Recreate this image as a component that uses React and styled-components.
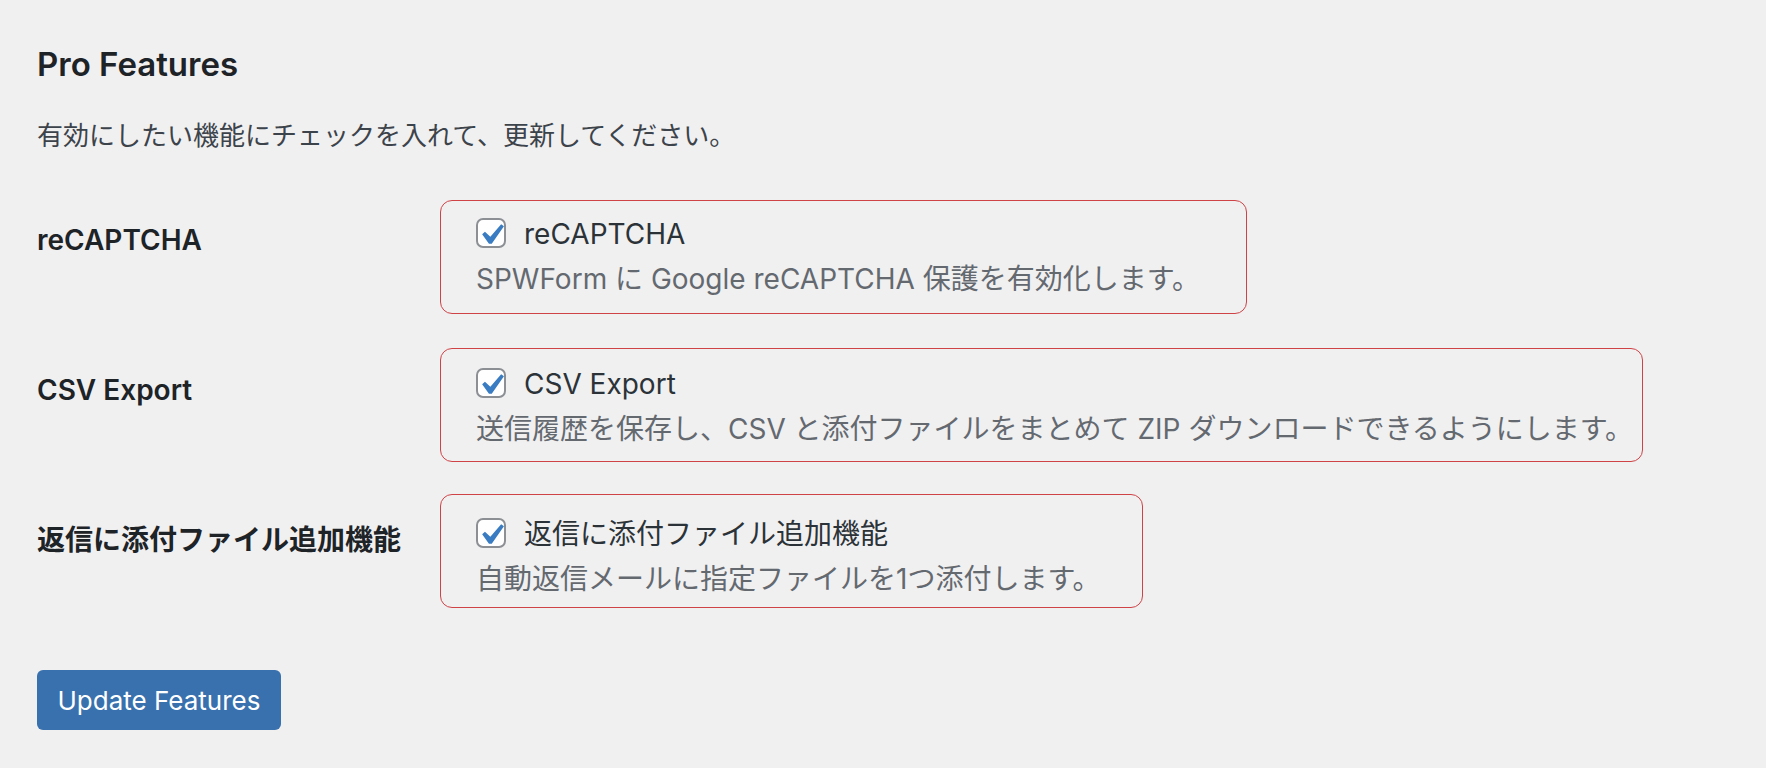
import React from "react";
import styled, { createGlobalStyle } from "styled-components";

const GlobalStyle = createGlobalStyle`
  html, body {
    margin: 0;
    padding: 0;
    background: #f0f0f1;
  }
  body {
    font-family: Inter, "Noto Sans CJK JP", sans-serif;
    color: #3c434a;
  }
`;

const Page = styled.div`
  box-sizing: border-box;
  width: 1766px;
  min-height: 768px;
  padding: 44px 0 0 37px;
  background: #f0f0f1;
`;

const Title = styled.h2`
  margin: 0;
  font-size: 33px;
  line-height: 40px;
  font-weight: 600;
  color: #1d2327;
`;

const Intro = styled.p`
  margin: 34px 0 0;
  font-size: 26px;
  line-height: 36px;
  color: #3c434a;
`;

const Table = styled.div`
  margin-top: 40px;
  display: flex;
  flex-direction: column;
`;

const Row = styled.div`
  display: grid;
  grid-template-columns: 403px auto;
  align-items: start;
  height: 150px;
`;

const Label = styled.div`
  padding-top: 28px;
  font-size: 28px;
  line-height: 36px;
  font-weight: 600;
  color: #1d2327;
`;

const Box = styled.div`
  box-sizing: border-box;
  width: ${(p) => p.$width}px;
  height: 114px;
  margin-top: ${(p) => p.$shift}px;
  padding: ${(p) => 23 - p.$shift}px 20px 0 35px;
  border: 1px solid #cf4246;
  border-radius: 12px;
`;

const CheckRow = styled.label`
  display: flex;
  align-items: center;
  gap: 18px;
  height: 30px;
`;

const CheckBox = styled.span`
  box-sizing: border-box;
  flex-shrink: 0;
  width: 30px;
  height: 30px;
  border: 2px solid #8c8f94;
  border-radius: 7px;
  background: #fff;
  display: flex;
  align-items: center;
  justify-content: center;
  overflow: visible;

  svg {
    flex-shrink: 0;
    width: 42px;
    height: 42px;
    transform: translateY(2px);
  }
`;

const CheckText = styled.span`
  padding-top: 2px;
  font-size: 28px;
  line-height: 30px;
  color: #2c3338;
  white-space: nowrap;
`;

const Description = styled.p`
  margin: 12px 0 0;
  font-size: 28px;
  line-height: 38px;
  color: #646970;
  white-space: nowrap;
`;

const Button = styled.button`
  margin-top: 26px;
  width: 244px;
  height: 60px;
  padding: 0;
  border: none;
  border-radius: 6px;
  background: #3871ad;
  color: #fff;
  font-family: inherit;
  font-size: 26px;
  font-weight: 400;
  cursor: pointer;
`;

const Check = () => (
  <CheckBox>
    <svg viewBox="0 0 20 20" aria-hidden="true">
      <path
        d="M14.83 4.89l1.34.94-5.81 8.38H9.02L5.78 9.67l1.34-1.25 2.57 2.4z"
        fill="#3a7cc2"
      />
    </svg>
  </CheckBox>
);

const features = [
  {
    label: "reCAPTCHA",
    desc: "SPWForm に Google reCAPTCHA 保護を有効化します。",
    width: 807,
    shift: 6,
  },
  {
    label: "CSV Export",
    desc: "送信履歴を保存し、CSV と添付ファイルをまとめて ZIP ダウンロードできるようにします。",
    width: 1203,
    shift: 4,
  },
  {
    label: "返信に添付ファイル追加機能",
    desc: "自動返信メールに指定ファイルを1つ添付します。",
    width: 703,
    shift: 0,
  },
];

export default function App() {
  return (
    <>
      <GlobalStyle />
      <Page>
        <Title>Pro Features</Title>
        <Intro>有効にしたい機能にチェックを入れて、更新してください。</Intro>
        <Table>
          {features.map((f) => (
            <Row key={f.label}>
              <Label>{f.label}</Label>
              <Box $width={f.width} $shift={f.shift}>
                <CheckRow>
                  <Check />
                  <CheckText>{f.label}</CheckText>
                </CheckRow>
                <Description>{f.desc}</Description>
              </Box>
            </Row>
          ))}
        </Table>
        <Button type="button">Update Features</Button>
      </Page>
    </>
  );
}
